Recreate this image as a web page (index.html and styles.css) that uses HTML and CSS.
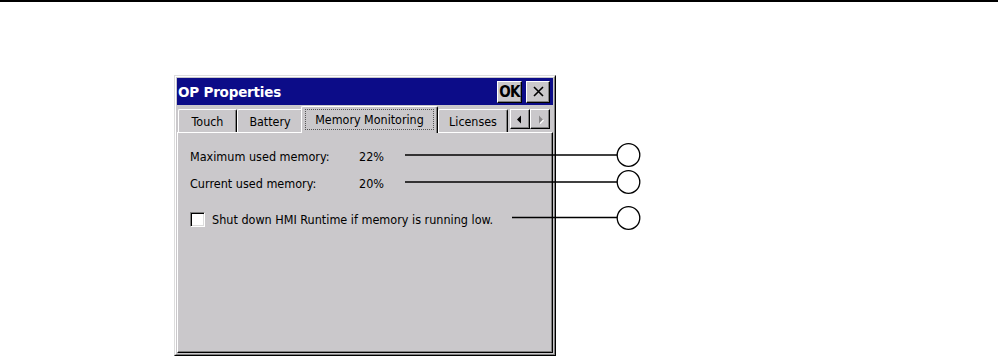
FILE: index.html
```html
<!DOCTYPE html>
<html>
<head>
<meta charset="utf-8">
<link rel="stylesheet" href="styles.css">
</head>
<body>
<div class="topline"></div>
<div class="stage">
  <div class="window">
    <div class="window-inner">
      <div class="titlebar">
        <span class="title">OP Properties</span>
        <div class="tbtn ok">OK</div>
        <div class="tbtn close">
          <svg width="11" height="11" viewBox="0 0 11 11"><path d="M1 1 L10 10 M10 1 L1 10" stroke="#000" stroke-width="1.6" fill="none"/></svg>
        </div>
      </div>
      <div class="tabs">
        <div class="tab t-touch">Touch</div>
        <div class="tab t-battery">Battery</div>
        <div class="tab t-memory selected"><span class="focus">Memory Monitoring</span></div>
        <div class="tab t-licenses">Licenses</div>
        <div class="scroller">
          <div class="sbtn"><svg width="8" height="9" viewBox="0 0 8 9"><path d="M5 0.5 L1 4.5 L5 8.5 Z" fill="#000"/></svg></div>
          <div class="sbtn"><svg width="8" height="9" viewBox="0 0 8 9"><path d="M3 0.5 L7 4.5 L3 8.5 Z" fill="#fff" transform="translate(1,1)"/><path d="M3 0.5 L7 4.5 L3 8.5 Z" fill="#8a888a"/></svg></div>
        </div>
      </div>
      <div class="panel">
        <div class="row r1"><span class="label">Maximum used memory:</span><span class="value">22%</span></div>
        <div class="row r2"><span class="label">Current used memory:</span><span class="value">20%</span></div>
        <div class="row r3"><span class="check"></span><span class="ctext">Shut down HMI Runtime if memory is running low.</span></div>
      </div>
    </div>
  </div>
  <svg class="callouts" width="998" height="357" viewBox="0 0 998 357">
    <g stroke="#000" stroke-width="1.5" fill="none">
      <line x1="405" y1="155" x2="617" y2="155"/>
      <line x1="405" y1="182" x2="617" y2="182"/>
      <line x1="512" y1="217.5" x2="617" y2="217.5"/>
      <circle cx="628.5" cy="155" r="11.3" stroke-width="1.3"/>
      <circle cx="628.5" cy="182" r="11.3" stroke-width="1.3"/>
      <circle cx="628.5" cy="218" r="11.3" stroke-width="1.3"/>
    </g>
  </svg>
</div>
</body>
</html>
```
FILE: styles.css
```css
html, body {
  margin: 0;
  padding: 0;
  background: #fff;
}
body {
  font-family: "DejaVu Sans Condensed", "DejaVu Sans", sans-serif;
  color: #000;
  width: 998px;
  height: 357px;
  overflow: hidden;
}
.topline {
  height: 2px;
  background: #000;
}
.stage {
  height: 355px;
  box-sizing: border-box;
  padding: 73px 0 0 174px;
}
.window {
  width: 382px;
  height: 281px;
  box-sizing: border-box;
  background: #cac8cb;
  border: 1px solid;
  border-color: #dcdcdc #000 #000 #dcdcdc;
  display: flex;
  flex-direction: column;
}
.window-inner {
  flex: 1;
  display: flex;
  flex-direction: column;
  border: 1px solid;
  border-color: #fff #808080 #808080 #fff;
  padding: 1px;
  min-height: 0;
}
.titlebar {
  height: 27px;
  flex: none;
  background: #0c0c88;
  display: flex;
  align-items: center;
  padding: 0 3px 0 1px;
}
.title {
  flex: 1;
  color: #fff;
  font-family: "DejaVu Sans", sans-serif;
  font-weight: bold;
  font-size: 13.5px;
  letter-spacing: -0.2px;
}
.tbtn {
  height: 22px;
  box-sizing: border-box;
  background: #cac8cb;
  border: 1px solid;
  border-color: #fff #000 #000 #fff;
  box-shadow: inset -1px -1px 0 #808080;
  display: flex;
  align-items: center;
  justify-content: center;
}
.ok {
  width: 25px;
  font-family: "DejaVu Sans Condensed", sans-serif;
  font-weight: bold;
  font-size: 15px;
  letter-spacing: -0.6px;
}
.close {
  width: 24px;
  margin-left: 4px;
}
.tabs {
  height: 27px;
  flex: none;
  display: flex;
  align-items: flex-end;
  padding-left: 1px;
  position: relative;
  z-index: 1;
  font-size: 12.4px;
}
.tab {
  height: 23px;
  box-sizing: border-box;
  border-top: 1px solid #fff;
  border-left: 1px solid #fff;
  border-right: 1px solid #000;
  box-shadow: inset -1px 0 0 #808080;
  border-radius: 2px 2px 0 0;
  display: flex;
  align-items: center;
  justify-content: center;
}
.t-touch { width: 59px; }
.t-battery { width: 66px; }
.t-licenses { width: 70px; margin-left: 2px; }
.tab.selected {
  width: 137px;
  height: 27px;
  margin: 0 -2px -1px -2px;
  background: #cac8cb;
  padding: 2px 3px 3px 3px;
  position: relative;
  z-index: 2;
}
.focus {
  flex: 1;
  align-self: stretch;
  display: flex;
  align-items: center;
  justify-content: center;
  border: 1px dotted #555;
}
.scroller {
  display: flex;
  margin-left: 2px;
  margin-bottom: 3px;
}
.sbtn {
  width: 20px;
  height: 20px;
  box-sizing: border-box;
  border: 1px solid;
  border-color: #fff #000 #000 #fff;
  box-shadow: inset -1px -1px 0 #808080;
  display: flex;
  align-items: center;
  justify-content: center;
}
.panel {
  flex: 1;
  border: 1px solid;
  border-color: #fff #000 #000 #fff;
  box-shadow: inset -1px -1px 0 #808080;
  padding: 15px 12px 0 12px;
  display: flex;
  flex-direction: column;
  font-size: 12.5px;
}
.row {
  height: 16px;
  display: flex;
  align-items: center;
}
.r2 { margin-top: 11px; }
.r3 { margin-top: 20px; }
.label { width: 169px; }
.check {
  width: 15px;
  height: 15px;
  box-sizing: border-box;
  background: #fff;
  border: 1px solid;
  border-color: #808080 #fff #fff #808080;
  box-shadow: inset 1px 1px 0 #000, inset -1px -1px 0 #dcdcdc;
  margin-right: 7px;
}
.callouts {
  position: absolute;
  left: 0;
  top: 0;
  pointer-events: none;
}
```
